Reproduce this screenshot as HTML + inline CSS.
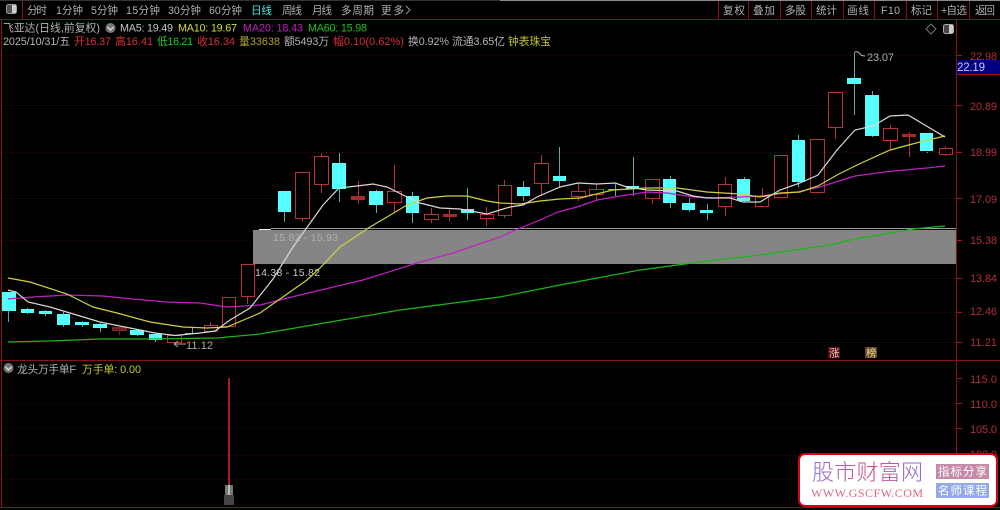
<!DOCTYPE html>
<html><head><meta charset="utf-8"><style>
html,body{margin:0;padding:0;background:#000;width:1000px;height:510px;overflow:hidden}
svg{display:block}
text{font-family:"Liberation Sans","Noto Sans CJK SC",sans-serif;font-size:10.8px;white-space:pre}
.t{fill:#b0b0b0;font-size:10.6px}
.g{fill:#b4b4b4}
.r{fill:#d83038}
.y{fill:#c8c838}
.a{fill:#b03038;font-size:11px}
</style></head><body>
<svg width="1000" height="510" viewBox="0 0 1000 510" xmlns="http://www.w3.org/2000/svg">
<defs><linearGradient id="wm" x1="0" x2="1" y1="0" y2="0"><stop offset="0" stop-color="#8a70d8"/><stop offset=".5" stop-color="#d04a80"/><stop offset="1" stop-color="#8a70d8"/></linearGradient></defs>
<rect width="1000" height="510" fill="#000"/>
<rect x="500" y="0" width="500" height="1" fill="#888"/>
<rect x="0" y="0" width="500" height="1" fill="#333"/>
<!-- frame -->
<path d="M0 19.5H1000M0 360.5H1000M0 507.5H1000M956.5 19V507M1.5 19V507M22.5 1V19M718.5 1V19M748.5 1V19M780.5 1V19M811.5 1V19M843.5 1V19M874.5 1V19M906.5 1V19M937.5 1V19M969.5 1V19" stroke="#8c1018" fill="none"/>
<!-- grid -->
<path d="M2 55.5H956M2 105.5H956M2 152.5H956M2 198.5H956M2 240.5H956M2 278.5H956M2 312.5H956M2 342.5H956M2 403.5H956M2 428.5H956M2 455.5H956M2 479.5H956" stroke="#4c1216" stroke-dasharray="1 3" fill="none"/>
<path d="M957 55.5H962M957 105.5H962M957 152.5H962M957 198.5H962M957 240.5H962M957 278.5H962M957 312.5H962M957 342.5H962M957 378.5H962M957 403.5H962M957 428.5H962M957 455.5H962" stroke="#9c1820" fill="none"/>
<!-- zone -->
<rect x="253" y="230" width="703" height="34" fill="#858585"/>
<rect x="271" y="228" width="685" height="1" fill="#9a9a9a"/>
<rect x="259" y="229" width="12" height="1" fill="#eee"/>
<text x="273" y="241" style="fill:#b0b0b0;font-size:10.5px" textLength="65">15.82 - 15.93</text>
<text x="255" y="276" style="fill:#c8c8c8;font-size:10.5px" textLength="65">14.38 - 15.82</text>
<!-- red candles -->
<path fill="none" stroke="#b83038" d="M167.5 335.5H181.5V342.5H167.5ZM204.5 325.5H217.5V331.5H204.5ZM210.5 322V325M222.5 297.5H235.5V326.5H222.5ZM241.5 264.5H254.5V296.5H241.5ZM247.5 296V304M295.5 172.5H309.5V218.5H295.5ZM302.5 218V222M314.5 156.5H328.5V184.5H314.5ZM321.5 153V156M321.5 184V193M358.5 181V204M387.5 191.5H401.5V202.5H387.5ZM394.5 165V191M394.5 202V212M424.5 214.5H438.5V219.5H424.5ZM431.5 208V214M431.5 219V223M449.5 208V221M480.5 214.5H493.5V218.5H480.5ZM486.5 207V214M486.5 218V226M498.5 185.5H511.5V215.5H498.5ZM504.5 180V185M504.5 215V218M534.5 163.5H548.5V183.5H534.5ZM541.5 155V163M541.5 183V196M571.5 191.5H585.5V196.5H571.5ZM578.5 183V191M578.5 196V201M589.5 189.5H603.5V194.5H589.5ZM596.5 184V189M596.5 194V200M645.5 179.5H659.5V198.5H645.5ZM652.5 198V204M718.5 184.5H731.5V206.5H718.5ZM725.5 177V184M725.5 206V216M755.5 196.5H768.5V206.5H755.5ZM762.5 188V196M774.5 155.5H787.5V197.5H774.5ZM810.5 139.5H824.5V192.5H810.5ZM828.5 92.5H842.5V127.5H828.5ZM835.5 127V139M883.5 128.5H897.5V140.5H883.5ZM890.5 125V128M890.5 140V150M909.5 132V157M939.5 148.5H952.5V154.5H939.5ZM945.5 146V148M945.5 154V156"/>
<path fill="#a82830" d="M443 214H457V217H443ZM902 134H916V137H902ZM351 196H365V200H351Z"/>
<path fill="#702028" stroke="#802028" d="M112.5 327.5H126.5V330.5H112.5Z"/>
<path fill="none" stroke="#802028" d="M119.5 330V335"/>
<!-- cyan wicks -->
<path fill="none" stroke="#5ea8a8" d="M8.5 311V322M27.5 308V314M45.5 310V316M63.5 312V327M82.5 321V327M100.5 323V332M137.5 329V336M155.5 333V342M192.5 328V334M284.5 212V222M339.5 153V202M376.5 190V213M412.5 192V223M467.5 188V220M523.5 181V201M559.5 147V187M633.5 157V196M670.5 176V208M689.5 198V212M707.5 204V220M744.5 177V202M798.5 135V187M854.5 52V115M872.5 91V137M927.5 152V153M615.5 184V196"/>
<path fill="#7ea8a8" d="M608 189H622V190H608ZM185 333H199V334H185Z"/>
<!-- cyan bodies -->
<path fill="#55ffff" d="M2 292H16V311H2ZM21 309H34V313H21ZM39 311H52V314H39ZM57 314H70V325H57ZM75 322H89V325H75ZM93 324H107V328H93ZM130 330H144V335H130ZM149 334H162V340H149ZM278 191H291V212H278ZM332 163H346V189H332ZM369 191H383V205H369ZM406 196H419V213H406ZM461 209H474V213H461ZM517 187H530V196H517ZM553 176H566V181H553ZM626 186H639V189H626ZM663 179H676V203H663ZM682 203H695V210H682ZM700 210H713V213H700ZM737 179H750V201H737ZM792 140H805V182H792ZM847 78H861V84H847ZM865 95H879V136H865ZM920 133H933V151H920Z"/>
<!-- MA lines -->
<polyline fill="none" stroke="#18b818" stroke-width="1.2" points="8,342 50,341 100,339 150,339 217,338 260,334 330,322 400,310 500,297 560,285 640,270 700,262 760,255 830,245 850,240 913,229 945,226"/>
<polyline fill="none" stroke="#c020c0" stroke-width="1.2" points="8,299 33,297 67,295 103,296 133,299 167,302 200,303 227,307 260,305 300,295 363,280 417,263 453,253 500,237 518,229 540,220 558,212 577,207 597,200 620,196 647,192 667,193 693,197 713,198 740,197 760,196 797,192 820,187 855,176 893,171 927,168 945,166"/>
<polyline fill="none" stroke="#d0d040" stroke-width="1.2" points="8,278 30,282 67,294 93,307 117,313 150,322 183,327 207,328 227,327 260,313 307,280 320,268 340,247 370,227 387,217 407,205 427,198 447,196 467,196 487,201 500,203 520,204 540,201 560,199 580,198 613,190 647,188 677,188 707,192 740,194 760,197 780,193 800,192 818,186 837,175 857,165 890,150 920,142 945,136"/>
<polyline fill="none" stroke="#d8d8d8" stroke-width="1.2" points="8,290 16,292 28,302 50,307 70,313 100,322 130,328 155,333 175,335.5 200,333 215,331 230,320 250,308 273,279 293,247 323,205 339,188 357,186 373,184 387,187 403,195 420,203 440,208 460,209 487,214 500,210 510,207 523,205 537,197 560,187 578,183 597,184 615,183 627,187 647,190 677,191 693,196 707,198 730,198 743,202 760,202 780,190 800,183 818,175 837,150 855,130 873,126 890,116 908,115 945,137"/>
<!-- annotations -->
<path d="M174 344H186M174 344L178 341M174 344L178 347" stroke="#aaa" fill="none"/>
<text x="186" y="349" style="fill:#a8a8a8;font-size:11px" textLength="27">11.12</text>
<path d="M855 52Q858 51 860 54Q862 56 865 56" stroke="#bbb" fill="none"/>
<text x="867" y="61" style="fill:#b0b0b0;font-size:11px" textLength="27">23.07</text>
<!-- tabs -->
<rect x="6.500" y="4.500" width="10" height="9" rx="2" fill="#555" stroke="#999"/><rect x="12" y="5" width="4" height="8" fill="#ccc"/>
<text class="t" x="27" y="14" textLength="20">分时</text>
<text class="t" x="56" y="14" textLength="27">1分钟</text>
<text class="t" x="91" y="14" textLength="27">5分钟</text>
<text class="t" x="126" y="14" textLength="34">15分钟</text>
<text class="t" x="168" y="14" textLength="33">30分钟</text>
<text class="t" x="209" y="14" textLength="33">60分钟</text>
<text class="t" x="251" y="14" textLength="21" style="fill:#50e8e8">日线</text>
<text class="t" x="282" y="14" textLength="20">周线</text>
<text class="t" x="312" y="14" textLength="20">月线</text>
<text class="t" x="341" y="14" textLength="33">多周期</text>
<text class="t" x="381" y="14" textLength="23">更多</text>
<path d="M406 6L410 10L406 14" stroke="#999" fill="none"/>
<text class="t" x="723" y="14" textLength="22">复权</text>
<text class="t" x="753" y="14" textLength="22">叠加</text>
<text class="t" x="785" y="14" textLength="21">多股</text>
<text class="t" x="816" y="14" textLength="21">统计</text>
<text class="t" x="847" y="14" textLength="22">画线</text>
<text class="t" x="881" y="14" textLength="19">F10</text>
<text class="t" x="911" y="14" textLength="21">标记</text>
<text class="t" x="941" y="14" textLength="26">+自选</text>
<text class="t" x="975" y="14" textLength="20">返回</text>
<!-- info line 1 -->
<text class="g" x="3" y="31.500" textLength="97">飞亚达(日线,前复权)</text>
<circle cx="110.500" cy="28" r="5" fill="#777"/><path d="M107.500 27L110.500 30L113.500 27" stroke="#ddd" stroke-width="1.300" fill="none"/>
<text x="120" y="31.500" textLength="53" style="fill:#c8c8c8">MA5: 19.49</text>
<text x="178" y="31.500" textLength="59" style="fill:#d8d840">MA10: 19.67</text>
<text x="243" y="31.500" textLength="60" style="fill:#c020c0">MA20: 18.43</text>
<text x="308" y="31.500" textLength="59" style="fill:#20c020">MA60: 15.98</text>
<!-- info line 2 -->
<text class="g" x="3" y="45" textLength="67">2025/10/31/五</text>
<text class="r" x="74" y="45" textLength="37">开16.37</text>
<text class="r" x="115" y="45" textLength="38">高16.41</text>
<text x="157" y="45" textLength="36" style="fill:#20c820">低16.21</text>
<text class="r" x="197" y="45" textLength="38">收16.34</text>
<text x="239" y="45" textLength="41" style="fill:#b0a030">量33638</text>
<text class="g" x="284" y="45" textLength="45">额5493万</text>
<text class="r" x="333" y="45" textLength="71">幅0.10(0.62%)</text>
<text class="g" x="408" y="45" textLength="41">换0.92%</text>
<text class="g" x="452" y="45" textLength="53">流通3.65亿</text>
<text class="y" x="508" y="45" textLength="43">钟表珠宝</text>
<!-- top right icons -->
<path d="M931 24L936 29L931 34L926 29Z" stroke="#777" fill="none"/>
<rect x="943.500" y="24.500" width="10" height="9" rx="2" fill="#444" stroke="#aaa"/><rect x="949" y="25" width="4" height="8" fill="#ccc"/>
<!-- axis -->
<rect x="957" y="60" width="43" height="14" fill="#000080"/>
<path d="M957 74.500H1000" stroke="#a01820"/>
<text x="957" y="71" textLength="28" style="fill:#c8c8ff;font-size:11.500px">22.19</text>
<text class="a" x="970" y="60" textLength="27">22.98</text>
<text class="a" x="970" y="110" textLength="27">20.89</text>
<text class="a" x="970" y="156" textLength="27">18.99</text>
<text class="a" x="970" y="203" textLength="27">17.09</text>
<text class="a" x="970" y="244" textLength="27">15.38</text>
<text class="a" x="970" y="282" textLength="27">13.84</text>
<text class="a" x="970" y="315" textLength="27">12.46</text>
<text class="a" x="970" y="346" textLength="27">11.21</text>
<text class="a" x="970" y="383" textLength="27">115.0</text>
<text class="a" x="970" y="408" textLength="27">110.0</text>
<text class="a" x="970" y="433" textLength="27">105.0</text>
<text class="a" x="970" y="458" textLength="27">100.0</text>
<!-- badges -->
<rect x="828" y="347" width="12" height="11" fill="#5c0c10"/>
<text x="829" y="356.500" style="fill:#e0c8c0;font-size:10.500px">涨</text>
<rect x="865" y="347" width="12" height="11" fill="#64440c"/>
<text x="866" y="356.500" style="fill:#e8dcc0;font-size:10.500px">榜</text>
<!-- lower panel -->
<circle cx="8.500" cy="368" r="5" fill="#777"/><path d="M5.500 367L8.500 370L11.500 367" stroke="#ddd" stroke-width="1.300" fill="none"/>
<text class="g" x="17" y="373" textLength="59">龙头万手单F</text>
<text class="y" x="82" y="373" textLength="59">万手单: 0.00</text>
<rect x="228" y="378" width="2" height="108" fill="#a81c24"/>
<rect x="224" y="495" width="10" height="10" fill="#444"/>
<rect x="225" y="485" width="8" height="10" fill="#777"/>
<rect x="228" y="485" width="2" height="10" fill="#bbb"/>
<!-- watermark -->
<rect x="799" y="454" width="198" height="52" rx="6" fill="#fff" stroke="#d80010" stroke-width="2"/>
<text x="812" y="480" textLength="111" style="font-size:22px;fill:url(#wm);font-family:'Noto Sans CJK SC',sans-serif;font-weight:300">股市财富网</text>
<text x="811" y="497" textLength="112" style="font-size:12px;fill:#e06878;font-family:'Liberation Serif',serif">WWW.GSCFW.COM</text>
<rect x="936" y="464" width="53" height="15" fill="#c48ba8"/>
<text x="938" y="475.500" textLength="49" style="fill:#fff;font-size:11.500px">指标分享</text>
<rect x="936" y="483" width="53" height="15" fill="#93a9e8"/>
<text x="938" y="494.500" textLength="49" style="fill:#fff;font-size:11.500px">名师课程</text>
</svg>
</body></html>
